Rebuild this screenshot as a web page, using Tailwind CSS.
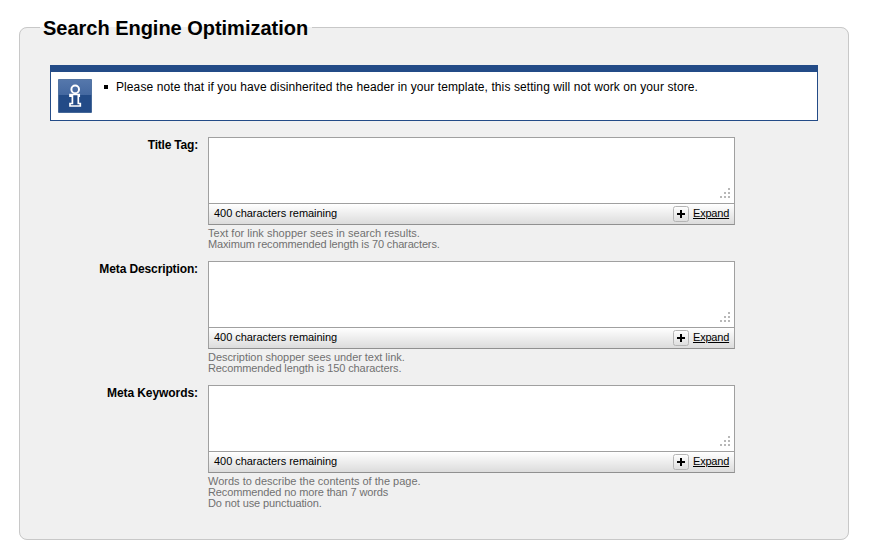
<!DOCTYPE html>
<html lang="en">
<head>
<meta charset="utf-8">
<title>Search Engine Optimization</title>
<script src="https://cdn.jsdelivr.net/npm/@tailwindcss/browser@4"></script>
</head>
<body class="h-[555px] overflow-hidden bg-white pl-[19px] pt-[14px] font-['Liberation_Sans',Arial,sans-serif] text-[12px] text-black">
<fieldset class="h-[526px] w-[830px] rounded-[8px] border border-[#c8c8c8] bg-[#f0f0f0] pl-[20px]">
  <legend class="h-[27px] w-[272px] whitespace-nowrap pl-[3px] text-[20px] font-bold leading-[28px] tracking-[-0.02px]">Search Engine Optimization</legend>
  <div class="ml-[10px] mt-[24px] flex h-[56px] w-[768px] border border-t-[7px] border-[#234b87] bg-white">
    <svg class="ml-[7px] mt-[7px] shrink-0" width="34" height="34" viewBox="0 0 34 34">
      <defs><linearGradient id="top" x2="0" y2="1"><stop stop-color="#5678ac"/><stop offset="1" stop-color="#4468a0"/></linearGradient></defs>
      <rect width="34" height="34" rx="1.5" fill="#234b87"/>
      <path d="M0 1.5Q0 0 1.5 0H32.5Q34 0 34 1.5V16H0Z" fill="url(#top)"/>
      <rect x=".5" y=".5" width="33" height="33" rx="1" fill="none" stroke="#54759f" stroke-opacity=".7"/>
      <circle cx="17.2" cy="10.4" r="3.8" fill="none" stroke="#fff" stroke-width="2"/>
      <path d="M12 15.5H21.2V17.2H20.3V24.5H22.3V27H12V24.5H14.4V17.2H12Z" fill="none" stroke="#fff" stroke-width="1.7"/>
      <path d="M16 17h2.6v8H16z" fill="#234b87"/>
    </svg>
    <ul class="ml-[12px] mt-[8px] flex h-[14px] items-center leading-[14px]">
      <li class="flex items-center whitespace-nowrap"><span class="mr-[8px] size-[4px] bg-black"></span><span class="tracking-[0.092px]">Please note that if you have disinherited the header in your template, this setting will not work on your store.</span></li>
    </ul>
  </div>
  <div id="fields" class="mt-[16px]"></div>
</fieldset>
<template id="field">
  <div class="flex h-[124px]">
    <label class="mr-[10px] w-[158px] whitespace-nowrap pt-px text-right font-bold leading-[14px]"></label>
    <div>
      <div class="h-[88px] w-[527px] border border-[#a0a0a0] border-b-[#909090] bg-white">
        <div class="flex h-[65px] items-end justify-end pb-[5px] pr-[4px]">
          <svg width="10" height="10" fill="#b8b8b8"><path d="M8 0h2v2h-2zM4 4h2v2h-2zM8 4h2v2h-2zM0 8h2v2h-2zM4 8h2v2h-2zM8 8h2v2h-2z"/></svg>
        </div>
        <div class="flex h-[21px] items-center border-t border-[#a0a0a0] bg-linear-to-b from-white to-[#dcdcdc] px-[5px] text-[11px]">
          <span class="pb-[2px] leading-[12px] tracking-[-0.04px]">400 characters remaining</span>
          <svg class="ml-auto mr-[4px]" width="16" height="16"><defs><linearGradient id="btn" x2="0" y2="1"><stop stop-color="#fff"/><stop offset="1" stop-color="#ddd"/></linearGradient></defs><rect x=".5" y=".5" width="15" height="15" rx="2" fill="url(#btn)" stroke="#b5b5b5"/><path d="M4 7h3V4h2v3h3v2H9v3H7V9H4z"/></svg>
          <a class="mb-[2px] w-[36px] whitespace-nowrap leading-[12px] tracking-[-0.2px] underline">Expand</a>
        </div>
      </div>
      <div class="mt-[3px] whitespace-nowrap text-[11px] leading-[11px] text-[#707070]"></div>
    </div>
  </div>
</template>
<script>
// Each text carries its own letter spacing in pixels.
const fields = [
  [["Title Tag:", -0.2], ["Text for link shopper sees in search results.", 0.02], ["Maximum recommended length is 70 characters.", -0.14]],
  [["Meta Description:", -0.12], ["Description shopper sees under text link.", -0.05], ["Recommended length is 150 characters.", -0.11]],
  [["Meta Keywords:", -0.07], ["Words to describe the contents of the page.", 0], ["Recommended no more than 7 words", -0.12], ["Do not use punctuation.", -0.11]]
];
for (const [[label, spacing], ...help] of fields) {
  const row = document.getElementById("field").content.cloneNode(true);
  const name = row.querySelector("label");
  name.textContent = label;
  name.style.letterSpacing = spacing + "px";
  const box = row.querySelector("label + div > div:last-child");
  for (const [text, gap] of help) {
    const line = document.createElement("p");
    line.textContent = text;
    line.style.letterSpacing = gap + "px";
    box.append(line);
  }
  document.getElementById("fields").append(row);
}
</script>
</body>
</html>
